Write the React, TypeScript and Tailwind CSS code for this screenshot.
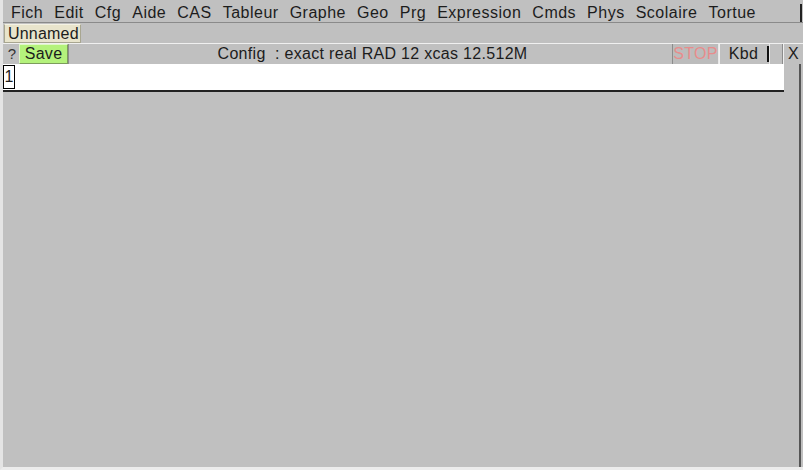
import React from 'react';

const menus = [
  'Fich', 'Edit', 'Cfg', 'Aide', 'CAS', 'Tableur', 'Graphe', 'Geo', 'Prg',
  'Expression', 'Cmds', 'Phys', 'Scolaire', 'Tortue',
];

const App = () => {
  return (
    <div
      className="w-[803px] h-[470px] bg-[#c0c0c0] text-[#1c1c1c] overflow-hidden flex flex-col border-l-[3px] border-l-[#e4e4e4] border-b-[3px] border-b-[#ececec]"
      style={{ fontFamily: '"Liberation Sans", Arial, sans-serif' }}
    >
      {/* menu bar */}
      <div className="h-[23px] flex items-stretch border-b border-b-[#8a8a8a] pr-[1px]">
        <div className="flex-1 flex items-center pl-[8px] gap-[11px] text-[16px] tracking-[0.5px] pt-[3px]">
          {menus.map(m => (
            <span key={m}>{m}</span>
          ))}
        </div>
        <div className="w-[2px] bg-[#222] mt-[4px]" />
      </div>

      {/* tab */}
      <div className="h-[20px] flex items-end">
        <div className="ml-[1px] h-[19px] pl-[3px] pr-[1px] flex items-center bg-[#e8e4cc] border border-[#a8a690] border-t-[#f4f2e4] text-[16px] tracking-[0.2px]">
          Unnamed
        </div>
      </div>

      {/* toolbar */}
      <div className="h-[21px] flex items-stretch border-t border-t-[#f0f0f0] text-[16px] tracking-[0.3px]">
        <div className="w-[16px] flex items-center justify-center text-[#333] text-[15px] pl-[2px]">?</div>
        <div className="w-[49px] bg-[#b4f27c] flex items-center justify-center border border-[#e0f8c8] border-r-[#7c9c5c] border-b-[#7c9c5c]">
          Save
        </div>
        <div className="flex-1 flex items-center justify-center border-l border-l-[#8c8c8c] pl-[4px]">
          Config&nbsp; : exact real RAD 12 xcas 12.512M
        </div>
        <div className="w-[47px] flex items-center justify-center text-[#e88c8c] bg-[#bcbcbc] border-l border-l-[#8c8c8c] border-r border-r-[#e8e8e8]">
          STOP
        </div>
        <div className="w-[48px] flex items-center justify-center border-l border-l-[#f0f0f0]">
          Kbd
        </div>
        <div className="w-[2px] bg-[#111] my-[2px]" />
        <div className="w-[14px] border-l border-l-[#e8e8e8] border-r border-r-[#8c8c8c]" />
        <div className="w-[20px] flex items-center justify-center border-l border-l-[#f0f0f0]">X</div>
      </div>

      {/* main area */}
      <div className="flex-1 flex">
        <div className="flex-1 flex flex-col">
          <div className="h-[28px] w-[781px] flex bg-white border-b-2 border-b-[#222]">
            <div className="w-[12px] h-[24px] mt-[1px] border border-black flex items-center justify-center text-[16px] bg-white">
              1
            </div>
          </div>
        </div>
        <div className="w-[2px] bg-[#555] mr-[2px]" />
      </div>
    </div>
  );
};

export default App;
